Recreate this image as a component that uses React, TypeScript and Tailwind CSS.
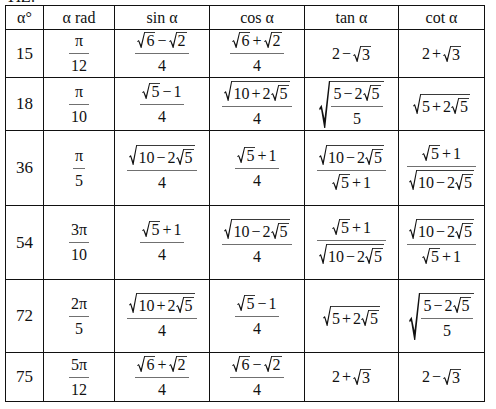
import type { ReactNode } from "react";

function Sqrt({
  children,
  nested,
  big,
}: {
  children: ReactNode;
  nested?: boolean;
  big?: boolean;
}) {
  return (
    <span
      className={`relative inline-block border-t border-[#3a3a3a] pr-[1px] pl-[1px] leading-[15px] ${
        big ? "ml-[11px] pt-[3px]" : nested ? "ml-[8px] pt-[3px]" : "ml-[8px]"
      }`}
    >
      <svg
        viewBox="0 0 10 20"
        preserveAspectRatio="none"
        className={`absolute top-[-1px] h-[calc(100%+1px)] ${
          big ? "left-[-11px] w-[11px]" : "left-[-8px] w-[8px]"
        }`}
      >
        <path
          d="M0.2 11.6 L2.4 10.1 L5 16 L9 0 L10 0 L10 0.9 L5.7 20 L4.7 20 L1.8 11.9 L0.6 12.4 Z"
          fill="#111"
        />
      </svg>
      {children}
    </span>
  );
}

function Op({ children }: { children: ReactNode }) {
  return <span className="mx-[2px]">{children}</span>;
}

function Frac({ n, d }: { n: ReactNode; d: ReactNode }) {
  return (
    <span className="inline-flex flex-col items-center align-middle">
      <span className="whitespace-nowrap px-[2px] leading-[18px]">{n}</span>
      <span className="my-[3px] h-px self-stretch bg-[#707070]" />
      <span className="whitespace-nowrap px-[2px] leading-[18px]">{d}</span>
    </span>
  );
}

// pieces that repeat a lot
const r5 = <Sqrt>5</Sqrt>;
const tenMinus = (
  <Sqrt nested>
    10<Op>−</Op>2{r5}
  </Sqrt>
);
const tenPlus = (
  <Sqrt nested>
    10<Op>+</Op>2{r5}
  </Sqrt>
);
const fivePlus = (
  <Sqrt nested>
    5<Op>+</Op>2{r5}
  </Sqrt>
);
const r5plus1 = (
  <>
    {r5}
    <Op>+</Op>1
  </>
);
const bigRoot = (
  <Sqrt big>
    <Frac
      n={
        <>
          5<Op>−</Op>2{r5}
        </>
      }
      d="5"
    />
  </Sqrt>
);

const header = ["α°", "α rad", "sin α", "cos α", "tan α", "cot α"];

const rows: { deg: string; cells: ReactNode[] }[] = [
  {
    deg: "15",
    cells: [
      <Frac n="π" d="12" />,
      <Frac n={<><Sqrt>6</Sqrt><Op>−</Op><Sqrt>2</Sqrt></>} d="4" />,
      <Frac n={<><Sqrt>6</Sqrt><Op>+</Op><Sqrt>2</Sqrt></>} d="4" />,
      <>2<Op>−</Op><Sqrt>3</Sqrt></>,
      <>2<Op>+</Op><Sqrt>3</Sqrt></>,
    ],
  },
  {
    deg: "18",
    cells: [
      <Frac n="π" d="10" />,
      <Frac n={<>{r5}<Op>−</Op>1</>} d="4" />,
      <Frac n={tenPlus} d="4" />,
      bigRoot,
      fivePlus,
    ],
  },
  {
    deg: "36",
    cells: [
      <Frac n="π" d="5" />,
      <Frac n={tenMinus} d="4" />,
      <Frac n={r5plus1} d="4" />,
      <Frac n={tenMinus} d={r5plus1} />,
      <Frac n={r5plus1} d={tenMinus} />,
    ],
  },
  {
    deg: "54",
    cells: [
      <Frac n="3π" d="10" />,
      <Frac n={r5plus1} d="4" />,
      <Frac n={tenMinus} d="4" />,
      <Frac n={r5plus1} d={tenMinus} />,
      <Frac n={tenMinus} d={r5plus1} />,
    ],
  },
  {
    deg: "72",
    cells: [
      <Frac n="2π" d="5" />,
      <Frac n={tenPlus} d="4" />,
      <Frac n={<>{r5}<Op>−</Op>1</>} d="4" />,
      fivePlus,
      bigRoot,
    ],
  },
  {
    deg: "75",
    cells: [
      <Frac n="5π" d="12" />,
      <Frac n={<><Sqrt>6</Sqrt><Op>+</Op><Sqrt>2</Sqrt></>} d="4" />,
      <Frac n={<><Sqrt>6</Sqrt><Op>−</Op><Sqrt>2</Sqrt></>} d="4" />,
      <>2<Op>+</Op><Sqrt>3</Sqrt></>,
      <>2<Op>−</Op><Sqrt>3</Sqrt></>,
    ],
  },
];

const cell = "flex items-center justify-center border-r border-b border-[#111]";

export default function App() {
  return (
    <div className="min-h-screen bg-white font-['Liberation_Serif',serif] text-[#111]">
      {/* bottom of the previous line, cut by the crop */}
      <div className="h-[5px] overflow-hidden pl-[6px]">
        <div className="-mt-[11px] text-[16px] leading-[16px]">ΤΙΖ.</div>
      </div>
      <div className="pl-[5px]">
        <div className="grid w-fit grid-cols-[38px_71px_95px_95px_94px_86px] grid-rows-[24px_48px_53px_75px_74px_73px_49px] border-t border-l border-[#111]">
          {header.map((h) => (
            <div key={h} className={`${cell} text-[16px]`}>
              {h}
            </div>
          ))}
          {rows.map((row) => (
            <div key={row.deg} className="contents">
              <div className={`${cell} text-[17px]`}>{row.deg}</div>
              {row.cells.map((c, i) => (
                <div key={i} className={`${cell} text-[16px] whitespace-nowrap`}>
                  {c}
                </div>
              ))}
            </div>
          ))}
        </div>
      </div>
    </div>
  );
}
